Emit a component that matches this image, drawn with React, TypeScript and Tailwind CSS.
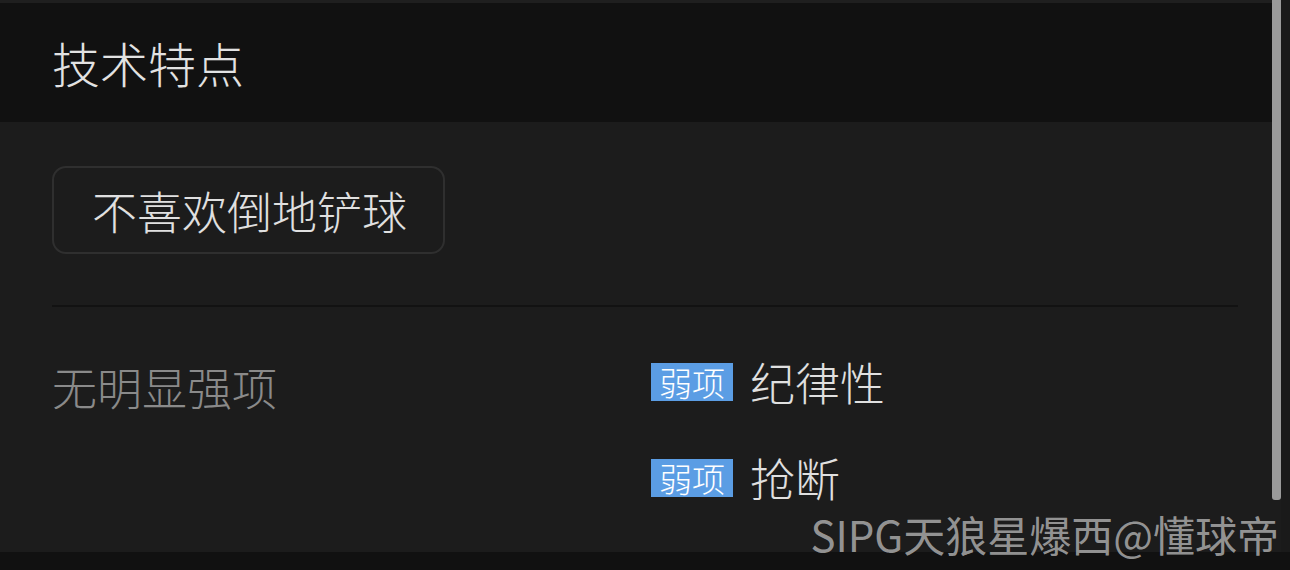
const weak = ["纪律性", "抢断"];

const font = { fontFamily: '"Noto Sans CJK SC", "Noto Sans", sans-serif' };

const App = () => {
  return (
    <div
      className="relative w-[1290px] h-[570px] overflow-hidden bg-[#1c1c1c] font-light [font-family:'Noto_Sans_CJK_SC','Noto_Sans',sans-serif]"
    >
      <div className="h-[3px] bg-[#1f1f1f]" />
      <div className="h-[119px] bg-[#111111] px-[52px] flex items-center">
        <h2 className="text-[48px] leading-none text-[#e2e2e2] -mt-[2px]">技术特点</h2>
      </div>

      <section className="h-[430px] px-[52px] pt-[44px]">
        <div className="w-[393px] h-[88px] rounded-[14px] border-2 border-[#2f2f2f] flex items-center justify-center">
          <span className="text-[45px] leading-none text-[#e0e0e0] ml-[2px]">不喜欢倒地铲球</span>
        </div>

        <div className="mt-[51px] h-[2px] bg-[#121212]" />

        <div className="grid grid-cols-[599px_1fr] mt-[52px]">
          <div className="text-[45px] leading-none text-[#8a8a8a] pt-[5px]">无明显强项</div>
          <div className="flex flex-col gap-[51px]">
            {weak.map((item) => (
              <div key={item} className="flex items-center gap-[17px]">
                <span className="h-[38px] px-[8px] bg-[#5b9de4] text-white text-[33px] leading-[38px]">
                  弱项
                </span>
                <span className="text-[45px] leading-none text-[#e0e0e0]">{item}</span>
              </div>
            ))}
          </div>
        </div>
      </section>

      <div className="h-[18px] bg-[#111111]" />

      {/* scrollbar */}
      <div className="absolute top-0 right-[9px] w-[9px] h-[500px] bg-[#9a9a9a] rounded-b-[3px]" />
      <div className="absolute top-0 right-0 w-[9px] h-[552px] bg-[#1a1a1a]" />

      {/* watermark */}
      <div
        className="absolute right-[11px] bottom-[15px] text-[42px] leading-none font-normal text-[#a3a3a3]/90"
        style={font}
      >
        SIPG天狼星爆西@懂球帝
      </div>
    </div>
  );
};

export default App;
